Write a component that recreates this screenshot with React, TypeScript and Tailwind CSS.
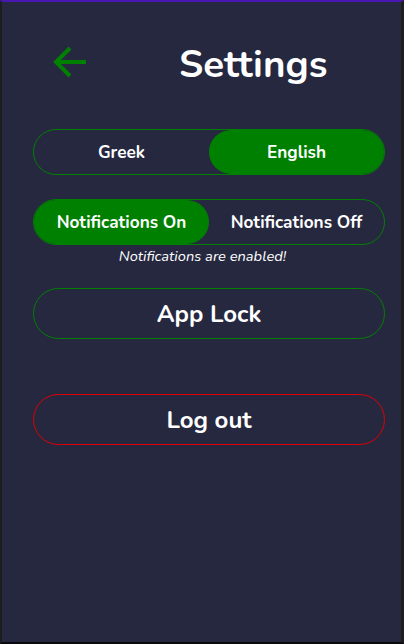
import { useState } from 'react';

const font = { fontFamily: '"Nunito", "Lato", "Open Sans", sans-serif' };

function Toggle({
  left,
  right,
  active,
  onChange,
}: {
  left: string;
  right: string;
  active: 'left' | 'right';
  onChange: (v: 'left' | 'right') => void;
}) {
  return (
    <div className="flex h-[46px] w-[352px] rounded-full border border-[#008000]">
      <button
        onClick={() => onChange('left')}
        className={`flex flex-1 items-center justify-center rounded-full pt-[2px] text-[17.2px] font-bold text-white ${
          active === 'left' ? 'bg-[#008000]' : ''
        }`}
      >
        {left}
      </button>
      <button
        onClick={() => onChange('right')}
        className={`flex flex-1 items-center justify-center rounded-full pt-[2px] text-[17.2px] font-bold text-white ${
          active === 'right' ? 'bg-[#008000]' : ''
        }`}
      >
        {right}
      </button>
    </div>
  );
}

export default function App() {
  const [lang, setLang] = useState<'left' | 'right'>('right');
  const [notif, setNotif] = useState<'left' | 'right'>('left');

  return (
    <div
      className="h-[644px] w-[404px] border-t-2 border-r-[3px] border-b-2 border-l-2 border-t-[#4a16b0] border-r-[#1d1d1f] border-b-[#0a0a0c] border-l-[#1d1d1f] bg-[#262840]"
      style={font}
    >
      <div className="flex h-[127px] items-start pt-[43px]">
        <button className="ml-[51px] flex h-[34px] w-[36px] items-center justify-center">
          <svg width="36" height="34" viewBox="0 0 36 34" fill="none">
            <path
              d="M17 3 L3 17 L17 31 M3 17 H33"
              stroke="#008000"
              strokeWidth="4"
              strokeLinecap="butt"
            />
          </svg>
        </button>
        <h1 className="ml-[90px] text-[38.5px] leading-[40px] font-bold text-white">
          Settings
        </h1>
      </div>

      <div className="ml-[31px] flex flex-col">
        <Toggle left="Greek" right="English" active={lang} onChange={setLang} />
        <div className="mt-[24px]">
          <Toggle
            left="Notifications On"
            right="Notifications Off"
            active={notif}
            onChange={setNotif}
          />
        </div>
        <p className="mt-[2px] w-[352px] pr-[13px] text-center text-[14.7px] leading-[18px] text-white italic">
          {notif === 'left'
            ? 'Notifications are enabled!'
            : 'Notifications are disabled!'}
        </p>
        <button className="mt-[23px] h-[51px] w-[352px] rounded-full border border-[#008000] text-[24px] font-bold text-white">
          App Lock
        </button>
        <button className="mt-[55px] h-[51px] w-[352px] rounded-full border border-[#e00000] text-[24px] font-bold text-white">
          Log out
        </button>
      </div>
    </div>
  );
}
